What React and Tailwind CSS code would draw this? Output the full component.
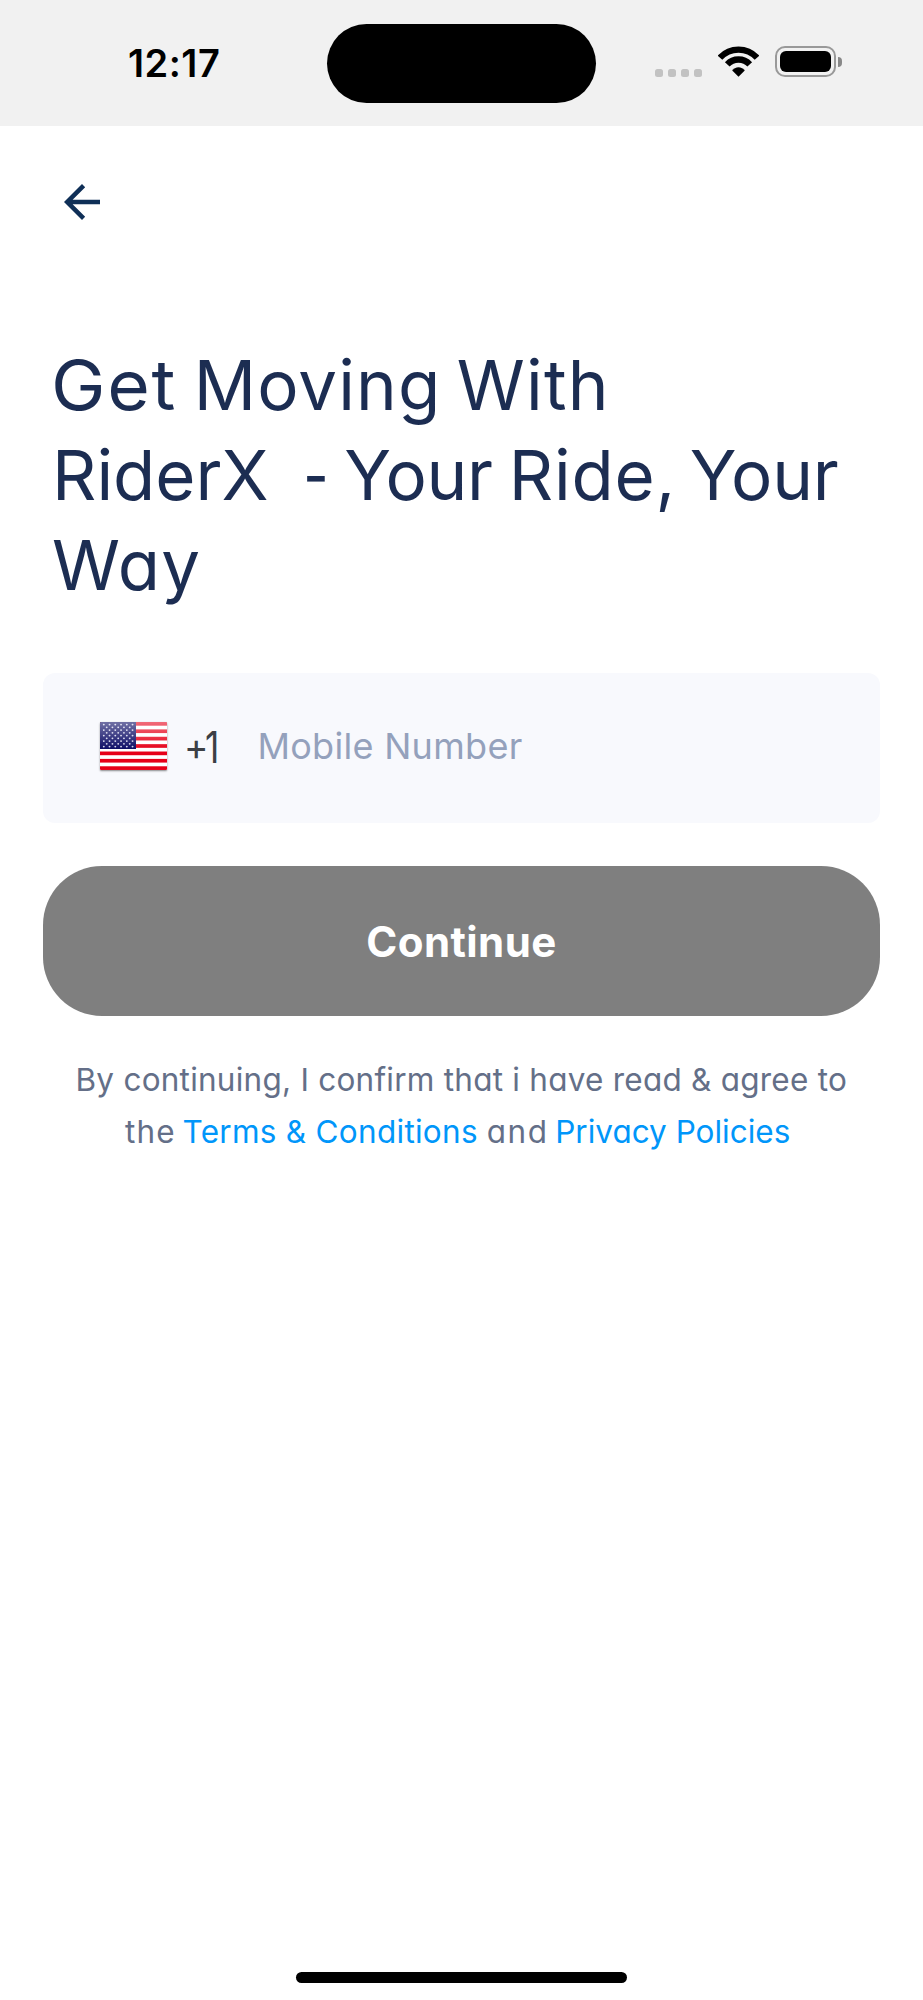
import React from 'react';

const STRIPES = [0, 2, 4, 6, 8, 10, 12];
const STAR_ROWS = [0, 1, 2, 3, 4, 5, 6, 7, 8];

const WifiIcon = () => (
    <svg viewBox="0 0 124 92" className="w-[41px] h-[31px]" fill="none" stroke="#000" strokeWidth="19">
        <path d="M6 34.6A76 76 0 0 1 118 34.6" />
        <path d="M28 55A46 46 0 0 1 96 55" />
        <path d="M43 73.5A23 23 0 0 1 81 73.5L62 92Z" fill="#000" stroke="none" />
    </svg>
);

const ArrowBack = () => (
    <svg viewBox="0 0 24 24" className="w-[54px] h-[54px]" fill="#0f2f57">
        <path d="M20 11H7.83l5.59-5.59L12 4l-8 8 8 8 1.41-1.41L7.83 13H20v-2z" />
    </svg>
);

const UsFlag = () => (
    <svg viewBox="0 0 67 48" className="w-[67px] h-[48px] -mt-[5px] rounded-[1px] shadow-[0_1px_2px_rgba(0,0,0,0.45)]">
        <defs>
            <linearGradient id="gloss" x1="0" y1="0" x2="0" y2="1">
                <stop offset="0" stopColor="#fff" stopOpacity="0.42" />
                <stop offset="0.55" stopColor="#fff" stopOpacity="0.03" />
                <stop offset="0.56" stopColor="#fff" stopOpacity="0" />
            </linearGradient>
        </defs>
        <rect width="67" height="48" fill="#fff" />
        {STRIPES.map((i) => (
            <rect key={i} y={i * 3.69} width="67" height="3.69" fill="#e60018" />
        ))}
        <rect width="36" height="27" fill="#0a0a64" />
        {STAR_ROWS.map((row) => (
            (row % 2 === 0 ? [0, 1, 2, 3, 4, 5] : [0, 1, 2, 3, 4]).map((col) => (
                <circle
                    key={`${row}-${col}`}
                    cx={3.8 + col * 5.75 + (row % 2) * 2.9}
                    cy={2.6 + row * 2.75}
                    r="0.95"
                    fill="#d5d5ec"
                />
            ))
        ))}
        <rect width="67" height="48" fill="url(#gloss)" />
    </svg>
);

const StatusBar = () => (
    <div className="flex items-start h-[126px] bg-[#f1f1f1] pl-[128px]">
        <span className="w-[199px] mt-[44px] text-[38px] leading-[38px] font-semibold tracking-[0.5px] text-black">12:17</span>
        <div className="w-[269px] h-[79px] mt-[24px] rounded-full bg-black" />
        <div className="flex gap-[5px] ml-[59px] mt-[69px]">
            <span className="size-2 rounded-[2.5px] bg-[#c2c2c2]" />
            <span className="size-2 rounded-[2.5px] bg-[#c2c2c2]" />
            <span className="size-2 rounded-[2.5px] bg-[#c2c2c2]" />
            <span className="size-2 rounded-[2.5px] bg-[#c2c2c2]" />
        </div>
        <div className="ml-[16px] mt-[46px]">
            <WifiIcon />
        </div>
        <div className="flex items-center ml-[16px] mt-[46px]">
            <div className="w-[61px] h-[31px] rounded-[10px] border-2 border-[#999] p-[3px]">
                <div className="w-full h-full rounded-[6px] bg-black" />
            </div>
            <div className="w-[4px] h-[10px] ml-[2px] rounded-r-full bg-[#888]" />
        </div>
    </div>
);

const App = () => {
    return (
        <div className="flex flex-col h-[2000px] bg-white overflow-hidden font-['Inter',sans-serif] [font-feature-settings:'cv11']">
            <StatusBar />

            <button className="self-start ml-[55px] mt-[49px]">
                <ArrowBack />
            </button>

            <h1 className="mt-[111px] pl-[51px] text-[69px] leading-[90px] text-[#1c2d52] whitespace-nowrap">
                <span className="flex">
                    <span className="origin-left scale-x-[1.06] tracking-[1.5px]">Get</span>
                    <span className="ml-[24px] tracking-[1.1px]">Moving</span>
                    <span className="ml-[15.5px] tracking-[1.2px]">With</span>
                </span>
                <span className="flex">
                    <span className="ml-px">RiderX</span>
                    <span className="ml-[31px] scale-x-[0.8]">-</span>
                    <span className="ml-[12.8px] tracking-[-0.3px]">Your</span>
                    <span className="ml-[16px] tracking-[0.8px]">Ride,</span>
                    <span className="ml-[13.7px] tracking-[-0.3px]">Your</span>
                </span>
                <span className="flex">
                    <span className="ml-px tracking-[1.2px]">Way</span>
                </span>
            </h1>

            {/* Phone input */}
            <div className="flex items-center h-[150px] mx-[43px] mt-[63px] pl-[57px] rounded-xl bg-[#f8f9fd]">
                <UsFlag />
                <div className="flex items-center ml-[17px] -mt-[3px] text-[#3c3f45]">
                    <span className="text-[37px] leading-[44px]">+</span>
                    <span className="-ml-[3px] origin-left scale-x-[0.8] text-[44px] leading-[44px]">1</span>
                </div>
                <input
                    type="tel"
                    placeholder="Mobile Number"
                    className="ml-[34px] -mt-[4px] w-[400px] text-[36px] tracking-[0.3px] outline-none placeholder:text-[#94a1bc]"
                />
            </div>

            <button className="h-[150px] mx-[43px] mt-[43px] rounded-[59px] bg-[#7f7f7f] text-white text-[42px] font-bold tracking-[0.4px]">
                Continue
            </button>

            <div className="mt-[38px] text-[31.5px] leading-[52px] text-[#646f88] whitespace-nowrap">
                <p className="pl-[75.5px] tracking-[0.24px]">By continuing, I confirm that i have read &amp; agree to</p>
                <p className="flex pl-[125px]">
                    <span className="tracking-[1.2px]">the</span>
                    <a className="ml-[6.6px] tracking-[0.28px] text-[#0096fa]">Terms &amp; Conditions</a>
                    <span className="ml-[8.9px] tracking-[1.5px]">and</span>
                    <a className="ml-[6.8px] text-[#0096fa]">Privacy Policies</a>
                </p>
            </div>

            {/* Home indicator */}
            <div className="w-[331px] h-[11px] mt-auto mb-[17px] mx-auto rounded-full bg-black" />
        </div>
    );
};

export default App;
